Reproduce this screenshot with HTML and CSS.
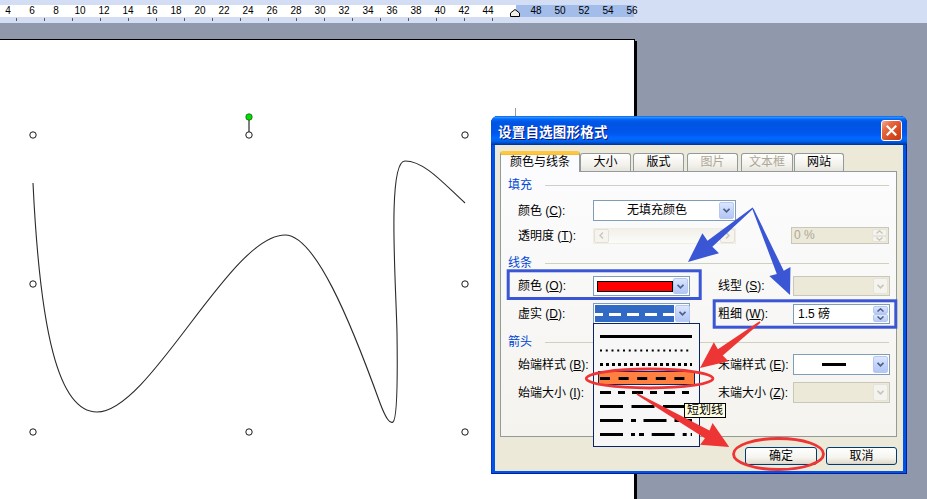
FILE: index.html
```html
<!DOCTYPE html>
<html lang="zh-CN">
<head>
<meta charset="utf-8">
<title>设置自选图形格式</title>
<link rel="stylesheet" href="styles.css">
</head>
<body>
<div class="ruler">
  <div class="ruler-band">
    <span class="num first">4</span><span class="num">6</span><span class="num">8</span><span class="num">10</span><span class="num">12</span><span class="num">14</span><span class="num">16</span><span class="num">18</span><span class="num">20</span><span class="num">22</span><span class="num">24</span><span class="num">26</span><span class="num">28</span><span class="num">30</span><span class="num">32</span><span class="num">34</span><span class="num">36</span><span class="num">38</span><span class="num">40</span><span class="num">42</span><span class="num">44</span><span class="num marker"><svg width="10" height="8" viewBox="0 0 10 8"><path d="M0.5 7.5 L0.5 4 L5 0.5 L9.5 4 L9.5 7.5 Z" fill="#F2F0E6" stroke="#000" stroke-width="1"/></svg></span><span class="num">48</span><span class="num">50</span><span class="num">52</span><span class="num">54</span><span class="num">56</span>
  </div>
  <div class="ruler-ticks"><div class="ticks"></div></div>
</div>

<div class="workspace">
  <div class="page">
    <svg class="drawing" width="634" height="460" viewBox="0 40 634 460">
      <path class="curve" d="M33,183 C40,330 58,412 97,412 C150,412 230,235 285,235 C315,235 350,320 380,403 C386,419 390,424 393,422 C396,420 398,400 397,333 C396,285 387,161 405,161 C425,161 445,185 465,203"/>
      <line class="stem" x1="249" y1="117" x2="249" y2="132"/>
      <circle class="rot" cx="249" cy="117" r="3.2"/>
      <circle class="hd" cx="33" cy="135" r="3.2"/>
      <circle class="hd" cx="249" cy="135" r="3.2"/>
      <circle class="hd" cx="465" cy="135" r="3.2"/>
      <circle class="hd" cx="33" cy="284" r="3.2"/>
      <circle class="hd" cx="465" cy="284" r="3.2"/>
      <circle class="hd" cx="33" cy="432" r="3.2"/>
      <circle class="hd" cx="249" cy="432" r="3.2"/>
      <circle class="hd" cx="465" cy="432" r="3.2"/>
      <line class="mark" x1="515.5" y1="108" x2="515.5" y2="117"/>
    </svg>
  </div>
</div>

<div class="dialog">
  <div class="titlebar">
    <span class="title">设置自选图形格式</span>
    <span class="close"><svg width="11" height="11" viewBox="0 0 11 11"><path d="M1.5 1.5 L9.5 9.5 M9.5 1.5 L1.5 9.5" stroke="#fff" stroke-width="2.2" stroke-linecap="square"/></svg></span>
  </div>
  <div class="dialog-body">
    <div class="tabs">
      <span class="tab active">颜色与线条</span>
      <span class="tab t2">大小</span>
      <span class="tab t3">版式</span>
      <span class="tab t4 dis">图片</span>
      <span class="tab t5 dis">文本框</span>
      <span class="tab t6">网站</span>
    </div>
    <div class="panel">
      <div class="sec s1">填充</div>
      <div class="row r1">
        <span class="lbl">颜色 (<u>C</u>):</span>
        <div class="combo w143"><span class="txt">无填充颜色</span><span class="ddbtn"><svg width="7" height="5" viewBox="0 0 7 5"><path d="M0.5 0.8 L3.5 3.8 L6.5 0.8" fill="none" stroke="#4D6185" stroke-width="1.7"/></svg></span></div>
      </div>
      <div class="row r2">
        <span class="lbl">透明度 (<u>T</u>):</span>
        <div class="scroll">
          <span class="sbtn"><svg width="5" height="7" viewBox="0 0 5 7"><path d="M4 0.5 L1 3.5 L4 6.5" fill="none" stroke="#C9C7BA" stroke-width="1.4"/></svg></span>
          <span class="strack"></span>
          <span class="sbtn"><svg width="5" height="7" viewBox="0 0 5 7"><path d="M1 0.5 L4 3.5 L1 6.5" fill="none" stroke="#C9C7BA" stroke-width="1.4"/></svg></span>
        </div>
        <div class="spin dis pct"><span class="txt">0 %</span><span class="spinbtns"><span class="sb"><svg width="7" height="4" viewBox="0 0 7 4"><path d="M0.5 3.5 L3.5 0.8 L6.5 3.5" fill="none" stroke="#C9C7BA" stroke-width="1.4"/></svg></span><span class="sb"><svg width="7" height="4" viewBox="0 0 7 4"><path d="M0.5 0.5 L3.5 3.2 L6.5 0.5" fill="none" stroke="#C9C7BA" stroke-width="1.4"/></svg></span></span></div>
      </div>

      <div class="sec s2">线条</div>
      <div class="row r3">
        <span class="lbl">颜色 (<u>O</u>):</span>
        <div class="combo w97"><span class="swatch"></span><span class="grow"></span><span class="ddbtn"><svg width="7" height="5" viewBox="0 0 7 5"><path d="M0.5 0.8 L3.5 3.8 L6.5 0.8" fill="none" stroke="#4D6185" stroke-width="1.7"/></svg></span></div>
        <span class="lbl rl">线型 (<u>S</u>):</span>
        <div class="combo w97 dis"><span class="grow"></span><span class="ddbtn"><svg width="7" height="5" viewBox="0 0 7 5"><path d="M0.5 0.8 L3.5 3.8 L6.5 0.8" fill="none" stroke="#C9C7BA" stroke-width="1.7"/></svg></span></div>
      </div>
      <div class="row r4">
        <span class="lbl">虚实 (<u>D</u>):</span>
        <div class="combo w97"><span class="dashsel"><svg width="79" height="19" viewBox="0 0 79 19"><line x1="0" y1="9.5" x2="79" y2="9.5" stroke="#fff" stroke-width="3" stroke-dasharray="12 6" stroke-dashoffset="4"/></svg></span><span class="grow"></span><span class="ddbtn"><svg width="7" height="5" viewBox="0 0 7 5"><path d="M0.5 0.8 L3.5 3.8 L6.5 0.8" fill="none" stroke="#4D6185" stroke-width="1.7"/></svg></span></div>
        <span class="lbl rl">粗细 (<u>W</u>):</span>
        <div class="spin w97"><span class="txt">1.5 磅</span><span class="spinbtns"><span class="sb"><svg width="7" height="4" viewBox="0 0 7 4"><path d="M0.5 3.5 L3.5 0.8 L6.5 3.5" fill="none" stroke="#4D6185" stroke-width="1.5"/></svg></span><span class="sb"><svg width="7" height="4" viewBox="0 0 7 4"><path d="M0.5 0.5 L3.5 3.2 L6.5 0.5" fill="none" stroke="#4D6185" stroke-width="1.5"/></svg></span></span></div>
      </div>

      <div class="sec s3">箭头</div>
      <div class="row r5">
        <span class="lbl">始端样式 (<u>B</u>):</span>
        <div class="combo w97"><span class="grow"></span><span class="ddbtn"></span></div>
        <span class="lbl rl">末端样式 (<u>E</u>):</span>
        <div class="combo w97"><span class="grow center"><span class="endline"></span></span><span class="ddbtn"><svg width="7" height="5" viewBox="0 0 7 5"><path d="M0.5 0.8 L3.5 3.8 L6.5 0.8" fill="none" stroke="#4D6185" stroke-width="1.7"/></svg></span></div>
      </div>
      <div class="row r6">
        <span class="lbl">始端大小 (<u>I</u>):</span>
        <div class="combo w97"><span class="grow"></span><span class="ddbtn"></span></div>
        <span class="lbl rl">末端大小 (<u>Z</u>):</span>
        <div class="combo w97 dis"><span class="grow"></span><span class="ddbtn"><svg width="7" height="5" viewBox="0 0 7 5"><path d="M0.5 0.8 L3.5 3.8 L6.5 0.8" fill="none" stroke="#C9C7BA" stroke-width="1.7"/></svg></span></div>
      </div>
    </div>
    <div class="btns">
      <button class="btn ok">确定</button>
      <button class="btn cancel">取消</button>
    </div>
  </div>

  <div class="popup">
    <div class="item"><svg width="92" height="3"><line x1="0" y1="1.5" x2="92" y2="1.5" stroke="#000" stroke-width="3"/></svg></div>
    <div class="item"><svg width="92" height="3"><line x1="0" y1="1.5" x2="92" y2="1.5" stroke="#000" stroke-width="2" stroke-dasharray="2 3.75"/></svg></div>
    <div class="item"><svg width="92" height="3"><line x1="0" y1="1.5" x2="92" y2="1.5" stroke="#000" stroke-width="3" stroke-dasharray="3 3"/></svg></div>
    <div class="item sel"><svg width="92" height="3"><line x1="0" y1="1.5" x2="92" y2="1.5" stroke="#000" stroke-width="3" stroke-dasharray="10 8.6"/></svg></div>
    <div class="item"><svg width="92" height="3"><line x1="0" y1="1.5" x2="92" y2="1.5" stroke="#000" stroke-width="3" stroke-dasharray="11 7 7 7"/></svg></div>
    <div class="item"><svg width="92" height="3"><line x1="0" y1="1.5" x2="92" y2="1.5" stroke="#000" stroke-width="3" stroke-dasharray="23 8.5"/></svg></div>
    <div class="item"><svg width="92" height="3"><line x1="0" y1="1.5" x2="92" y2="1.5" stroke="#000" stroke-width="3" stroke-dasharray="23 8 5 7.5"/></svg></div>
    <div class="item"><svg width="92" height="3"><line x1="0" y1="1.5" x2="92" y2="1.5" stroke="#000" stroke-width="3" stroke-dasharray="23 8 4 4 5 7.7"/></svg></div>
  </div>
  <div class="tip">短划线</div>
</div>

<svg class="annot" width="927" height="499" viewBox="0 0 927 499">
  <rect x="508.2" y="270.8" width="192" height="27.7" fill="none" stroke="#3A56D4" stroke-width="3"/>
  <rect x="714.2" y="300.8" width="181.6" height="26.4" fill="none" stroke="#3A56D4" stroke-width="3"/>
  <g fill="#3A56D4">
    <polygon transform="translate(753 208) rotate(140.3)" points="0,-0.7 56,-3.8 55,-13 84.5,0 55,13 56,3.8 0,0.7"/>
    <polygon transform="translate(753 209) rotate(66.7)" points="0,-0.7 69,-3.8 68,-11.5 93.6,0 68,11.5 69,3.8 0,0.7"/>
  </g>
  <g fill="#EE3535">
    <polygon transform="translate(760 322) rotate(142.5)" points="0,-0.8 50,-4 49,-12 75.6,0 49,12 50,4 0,0.8"/>
    <polygon transform="translate(637 394) rotate(29.9)" points="0,-0.8 81,-4.5 80,-12.5 106.4,0 80,12.5 81,4.5 0,0.8"/>
  </g>
  <ellipse cx="649.6" cy="378.5" rx="63.3" ry="9.5" fill="none" stroke="#EE3535" stroke-width="2.8"/>
  <ellipse cx="778.5" cy="454" rx="45" ry="15.5" fill="none" stroke="#EE3535" stroke-width="2.8"/>
</svg>
</body>
</html>
```

FILE: styles.css
```css
* { box-sizing: border-box; }
html, body { margin: 0; padding: 0; }
body {
  width: 927px;
  height: 499px;
  overflow: hidden;
  position: relative;
  background: #9098AC;
  font-family: "Liberation Sans", "Noto Sans CJK SC", sans-serif;
}

/* Ruler */
.ruler { height: 23px; background: #D3DEF5; padding-top: 5px; }
.ruler-band {
  height: 12px;
  display: flex;
  background: linear-gradient(to right, #fff 0 516px, #A3BDEB 516px 634px, transparent 634px);
}
.num { flex: 0 0 24px; text-align: center; font-size: 10px; line-height: 12px; color: #000; }
.num.first { margin-left: -4px; }
.num.marker { display: flex; justify-content: center; align-items: flex-end; padding-left: 5px; }
.num.marker svg { display: block; }
.ruler-ticks { height: 6px; padding-top: 1px; }
.ticks {
  width: 500px;
  height: 3px;
  background: repeating-linear-gradient(to right, transparent 0 16px, #5a5a5a 16px 17px, transparent 17px 28px);
}

/* Page */
.workspace { padding-top: 16px; }
.page {
  position: relative;
  margin-left: -1px;
  width: 636px;
  height: 470px;
  background: #fff;
  border: 1px solid #000;
  box-shadow: 2px 2px 0 #000;
}
.drawing { position: absolute; left: 0; top: 0; overflow: visible; }
.curve { fill: none; stroke: #2a2a2a; stroke-width: 1.1; }
.stem { stroke: #000; stroke-width: 1; }
.rot { fill: #00E000; stroke: #1a5a1a; stroke-width: 0.8; }
.hd { fill: #fff; stroke: #000; stroke-width: 0.9; }
.mark { stroke: #9a9a9a; stroke-width: 1; }

/* Dialog window */
.dialog {
  position: absolute;
  left: 491px;
  top: 116px;
  width: 416px;
  height: 358px;
  display: flex;
  flex-direction: column;
  padding: 0 4px 3px;
  border-radius: 7px 7px 0 0;
  background: #0054E3;
  box-shadow: inset 1px 0 #0831D9, inset -1px 0 #001EA0, inset 0 -1px #001EA0;
  font-family: "Liberation Sans", "Noto Sans CJK SC", sans-serif;
  font-size: 12px;
  color: #000;
}
.titlebar {
  height: 29px;
  flex: none;
  margin: 0 -4px;
  padding: 0 5px 0 7px;
  display: flex;
  align-items: center;
  border-radius: 7px 7px 0 0;
  background: linear-gradient(to bottom, #0058EE 0%, #3593FF 4%, #288EFF 6%, #127DFF 8%, #036FFC 10%, #0262EE 14%, #0057E5 20%, #0054E3 24%, #0055EB 56%, #005BF5 66%, #026AFE 76%, #0062EF 86%, #0052D6 92%, #0040AB 96%, #003092 100%);
}
.title {
  flex: 1;
  color: #fff;
  font-weight: bold;
  font-size: 13.5px;
  letter-spacing: 0.2px;
  text-shadow: 1px 1px #0A1883;
}
.close {
  width: 21px;
  height: 21px;
  display: flex;
  align-items: center;
  justify-content: center;
  border: 1px solid #fff;
  border-radius: 3px;
  background: linear-gradient(135deg, #F4AE95 0%, #E56A43 30%, #D74B22 65%, #C23A14 100%);
}
.close svg { display: block; }

.dialog-body {
  flex: 1;
  background: #ECE9D8;
  padding: 6px 6px 0 5px;
}

/* Tabs */
.tabs { display: flex; align-items: flex-end; height: 20px; position: relative; z-index: 1; }
.tab {
  height: 18px;
  width: 51px;
  border: 1px solid #919B9C;
  border-bottom: 0;
  border-radius: 3px 3px 0 0;
  background: linear-gradient(#FFFFFF, #F3F2EC 60%, #E6E4DB);
  text-align: center;
  line-height: 16px;
  font-size: 12px;
}
.tab.active {
  width: 80px;
  height: 21px;
  margin-bottom: -1px;
  background: #FCFCFE;
  border-top: 3px solid #FFC83C;
  box-shadow: inset 0 1px #F5B93A;
  line-height: 17px;
}
.tab.t3 { margin-left: 2px; }
.tab.t4 { margin-left: 3px; }
.tab.t5 { margin-left: 3px; width: 52px; }
.tab.t6 { margin-left: 1px; width: 50px; }
.tab.dis { color: #ACA899; }

/* Panel */
.panel {
  height: 266px;
  border: 1px solid #919B9C;
  background: linear-gradient(#FCFCFE, #F4F3EE);
  padding: 0 7px;
  line-height: 14px;
}
.sec {
  display: flex;
  align-items: center;
  height: 14px;
  color: #0046D5;
}
.sec::after {
  content: "";
  flex: 1;
  height: 1px;
  margin-left: 13px;
  background: #D0D0BF;
}
.s1 { margin-top: 6px; }
.s2 { margin-top: 12px; }
.s3 { margin-top: 11px; }

.row { display: flex; align-items: center; padding-left: 10px; }
.r1 { height: 21px; margin-top: 8px; }
.r2 { height: 17px; margin-top: 6px; }
.r3 { height: 20px; margin-top: 6px; }
.r4 { height: 21px; margin-top: 7px; }
.r5 { height: 21px; margin-top: 5px; }
.r6 { height: 21px; margin-top: 7px; }
.r3 .combo { height: 20px; }

.lbl { flex: none; width: 75px; white-space: nowrap; }
.lbl.rl { margin-left: 28px; }
.lbl u { text-decoration: underline; }

/* Combo boxes */
.combo {
  flex: none;
  height: 21px;
  display: flex;
  align-items: stretch;
  padding: 1px;
  border: 1px solid #7F9DB9;
  background: #fff;
}
.w143 { width: 143px; }
.w97 { width: 97px; }
.combo .txt { flex: 1; text-align: center; line-height: 17px; }
.grow { flex: 1; }
.grow.center { display: flex; align-items: center; justify-content: center; }
.ddbtn {
  flex: none;
  width: 15px;
  display: flex;
  align-items: center;
  justify-content: center;
  border: 1px solid #B6C8F2;
  border-radius: 2px;
  background: linear-gradient(#DCE6FE, #C4D4FB 50%, #B3C7F5);
}
.ddbtn svg { display: block; }
.combo.dis { border-color: #C9C7BA; background: #ECE9D8; }
.combo.dis .ddbtn { border-color: #E5E3DA; background: #F4F3EE; }

.swatch {
  flex: none;
  width: 76px;
  margin: 3px 0 2px 2px;
  border: 1px solid #000;
  background: #FF0000;
}
.dashsel { flex: none; width: 79px; background: #316AC5; margin-right: 1px; }
.dashsel svg { display: block; }
.endline { width: 24px; height: 3px; background: #000; }

/* Scroll bar (disabled) */
.scroll {
  flex: none;
  width: 143px;
  height: 16px;
  display: flex;
  border: 1px solid #EFEDE4;
  background: linear-gradient(#F1F0EA, #FBFBF8);
}
.sbtn {
  flex: none;
  width: 15px;
  display: flex;
  align-items: center;
  justify-content: center;
  border: 1px solid #E3E1D6;
  border-radius: 2px;
  background: #F5F4EE;
}
.strack { flex: 1; }

/* Spin boxes */
.spin {
  flex: none;
  height: 20px;
  display: flex;
  padding: 1px;
  border: 1px solid #7F9DB9;
  background: #fff;
}
.spin .txt { flex: 1; padding-left: 3px; line-height: 16px; }
.spin.pct { width: 98px; height: 17px; margin-left: 55px; }
.spin.dis { border-color: #C9C7BA; background: #ECE9D8; color: #ACA899; }
.spin.pct .txt { line-height: 13px; padding-left: 1px; }
.spinbtns { flex: none; width: 15px; display: flex; flex-direction: column; }
.sb {
  flex: 1;
  display: flex;
  align-items: center;
  justify-content: center;
  border: 1px solid #B6C8F2;
  border-radius: 2px;
  background: linear-gradient(#DCE6FE, #B9CCF7);
}
.sb svg { display: block; }
.spin.dis .sb { border-color: #E5E3DA; background: #F4F3EE; }

/* Buttons */
.btns { display: flex; justify-content: flex-end; gap: 9px; margin-top: 10px; }
.btn {
  height: 18px;
  padding: 0;
  border: 1px solid #003C74;
  border-radius: 3px;
  background: linear-gradient(#FFFFFF, #F5F4EF 60%, #E3E0D6 90%, #D6D0C5);
  font-family: "Liberation Sans", "Noto Sans CJK SC", sans-serif;
  font-size: 12px;
  line-height: 14px;
  color: #000;
}
.btn.ok { width: 72px; }
.btn.cancel { width: 71px; }

/* Drop-down list popup */
.popup {
  position: absolute;
  left: 102px;
  top: 207px;
  width: 107px;
  height: 124px;
  border: 1px solid #0A246A;
  background: #F7F7F7;
  padding: 5px 4px 0;
}
.item { height: 14px; display: flex; align-items: center; padding-left: 2px; }
.item svg { display: block; }
.item.sel { background: #FF8040; border: 1px solid #0A246A; padding-left: 1px; }

.tip {
  position: absolute;
  left: 193px;
  top: 287px;
  height: 15px;
  padding: 0 2px;
  border: 1px solid #000;
  background: #FFFFE1;
  font-size: 12px;
  line-height: 13px;
}

/* Annotations overlay */
.annot { position: absolute; left: 0; top: 0; z-index: 10; pointer-events: none; }
```
